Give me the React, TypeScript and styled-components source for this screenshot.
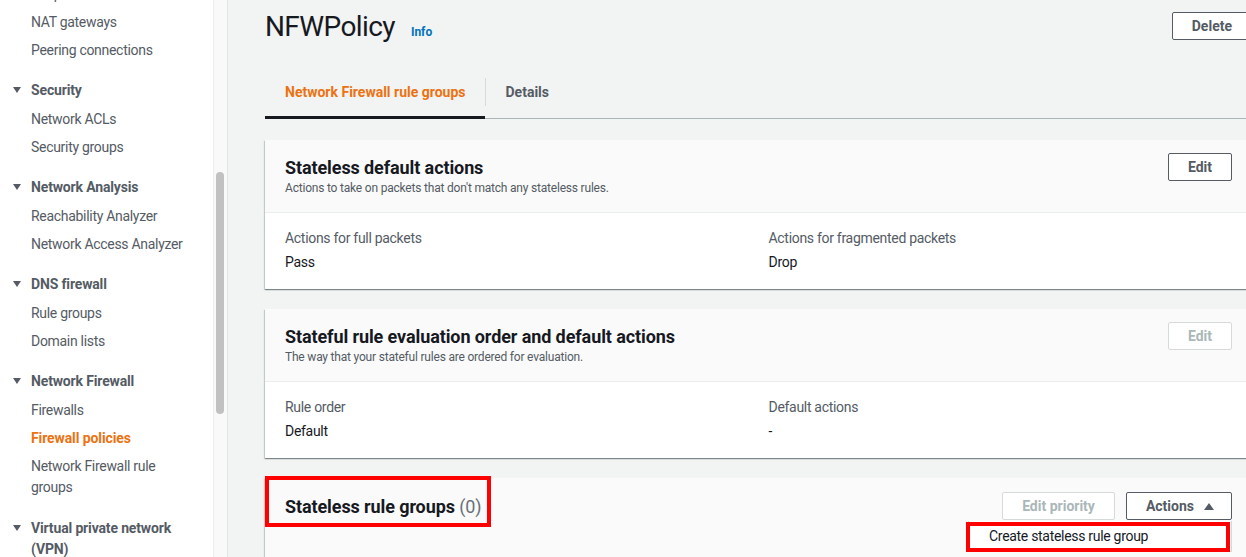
import React from "react";
import styled, { createGlobalStyle } from "styled-components";

const Global = createGlobalStyle`
  html, body { margin: 0; padding: 0; }
  body {
    font-family: Roboto, "Liberation Sans", Arial, sans-serif;
    font-size: 14px;
    color: #16191f;
    background: #f2f3f3;
  }
  * { box-sizing: border-box; }
`;

const Page = styled.div`
  display: flex;
  width: 1246px;
  height: 557px;
  overflow: hidden;
`;

/* ---------- Sidebar ---------- */
const Sidebar = styled.nav`
  width: 213px;
  flex-shrink: 0;
  background: #ffffff;
  overflow: hidden;
`;

const NavList = styled.div`
  margin-top: -20px;
  display: flex;
  flex-direction: column;
`;

const NavItem = styled.div<{ $active?: boolean }>`
  padding: 4px 22px 4px 31px;
  line-height: 20px;
  font-size: 14px;
  letter-spacing: ${(p) => (p.$active ? "-0.1px" : "-0.3px")};
  color: ${(p) => (p.$active ? "#ec7211" : "#545b64")};
  font-weight: ${(p) => (p.$active ? 700 : 400)};
`;

const WrapItem = styled(NavItem)`
  line-height: 21px;
`;

const Section = styled.div`
  margin-top: 11px;
  display: flex;
  flex-direction: column;
`;

const SectionHeader = styled.div`
  display: flex;
  align-items: flex-start;
  gap: 10px;
  padding: 5px 28px 5px 13px;
  line-height: 20px;
  font-weight: 700;
  letter-spacing: -0.15px;
  color: #545b64;
`;

const Caret = styled.svg`
  width: 8px;
  height: 20px;
  flex-shrink: 0;
`;

const SectionLabel = styled.span<{ $wrap?: boolean }>`
  line-height: ${(p) => (p.$wrap ? 21 : 20)}px;
`;

const ScrollTrack = styled.div`
  width: 15px;
  flex-shrink: 0;
  background: #f9f9f9;
  border-left: 1px solid #ececec;
  border-right: 1px solid #e1e4e4;
  padding-left: 2px;
`;

const ScrollThumb = styled.div`
  width: 8px;
  height: 242px;
  margin-top: 172px;
  border-radius: 4px;
  background: #c1c1c1;
`;

/* ---------- Main ---------- */
const Main = styled.main`
  flex: 1;
  overflow: hidden;
  padding-left: 37px;
  background: #f2f3f3;
`;

const Content = styled.div`
  width: 987px;
  display: flex;
  flex-direction: column;
`;

const HeaderRow = styled.div`
  display: flex;
  align-items: flex-start;
  justify-content: space-between;
  padding-top: 12px;
`;

const TitleGroup = styled.div`
  display: flex;
  align-items: baseline;
  gap: 16px;
`;

const PageTitle = styled.h1`
  margin: 0;
  font-size: 28px;
  line-height: 30px;
  font-weight: 400;
  letter-spacing: -0.6px;
  color: #16191f;
`;

const InfoLink = styled.a`
  font-size: 12px;
  font-weight: 700;
  color: #0073bb;
  text-decoration: none;
`;

const Button = styled.button<{ $disabled?: boolean }>`
  display: inline-flex;
  align-items: center;
  gap: 10px;
  height: 28px;
  padding: 0 19px;
  background: #ffffff;
  border: 1px solid ${(p) => (p.$disabled ? "#d5dbdb" : "#545b64")};
  border-radius: 2px;
  font-family: inherit;
  font-size: 14px;
  font-weight: 700;
  line-height: 20px;
  color: ${(p) => (p.$disabled ? "#aab7b8" : "#545b64")};
  cursor: pointer;
  white-space: nowrap;
`;

const MenuButton = styled(Button)`
  padding-right: 17px;
`;

const Tabs = styled.div`
  display: flex;
  align-items: center;
  margin-top: 28px;
  border-bottom: 1px solid #aab7b8;
`;

const Tab = styled.div<{ $active?: boolean }>`
  position: relative;
  padding: 12px 19px 16px 20px;
  line-height: 20px;
  font-weight: 700;
  color: ${(p) => (p.$active ? "#ec7211" : "#545b64")};
  &::after {
    content: "";
    position: absolute;
    left: 0;
    right: 0;
    bottom: -1px;
    height: 3px;
    background: ${(p) => (p.$active ? "#16191f" : "transparent")};
  }
`;

const TabDivider = styled.span`
  width: 1px;
  height: 28px;
  background: #d5dbdb;
  margin-bottom: 4px;
`;

const Cards = styled.div`
  display: flex;
  flex-direction: column;
  gap: 20px;
  margin-top: 21px;
`;

const Card = styled.section`
  background: #ffffff;
  box-shadow: 0 1px 1px 0 rgba(0, 28, 36, 0.3),
    1px 1px 1px 0 rgba(0, 28, 36, 0.15), -1px 1px 1px 0 rgba(0, 28, 36, 0.15);
`;

const CardHeader = styled.div<{ $tall?: boolean }>`
  display: flex;
  align-items: flex-start;
  justify-content: space-between;
  padding: ${(p) => (p.$tall ? "14px 20px 60px" : "13px 20px 16px")};
  background: #fafafa;
  border-bottom: 1px solid #eaeded;
`;

const HeadingBlock = styled.div<{ $pad?: number }>`
  position: relative;
  padding-top: ${(p) => p.$pad ?? 3}px;
`;

const CardTitle = styled.h2<{ $lh?: number }>`
  margin: 0;
  font-size: 18px;
  line-height: ${(p) => p.$lh ?? 24}px;
  font-weight: 700;
  letter-spacing: -0.1px;
  color: #16191f;
`;

const Counter = styled.span`
  font-weight: 400;
  color: #687078;
`;

const CardDesc = styled.p`
  margin: 0;
  font-size: 12px;
  line-height: 16px;
  letter-spacing: -0.2px;
  color: #545b64;
`;

const CardBody = styled.div`
  display: grid;
  grid-template-columns: 1fr 1fr;
  column-gap: 20px;
  padding: 15px 20px 17px;
`;

const Field = styled.div`
  display: flex;
  flex-direction: column;
  gap: 4px;
  letter-spacing: -0.3px;
`;

const FieldLabel = styled.div`
  line-height: 20px;
  color: #545b64;
`;

const FieldValue = styled.div`
  line-height: 20px;
  color: #16191f;
`;

const ButtonRow = styled.div`
  display: flex;
  gap: 11px;
`;

const DropdownAnchor = styled.div`
  position: relative;
`;

const Menu = styled.ul`
  position: absolute;
  top: 100%;
  right: 0;
  width: 264px;
  margin: 1px 0 0;
  padding: 0;
  list-style: none;
  background: #ffffff;
  border: 1px solid #d5dbdb;
  border-top: none;
  z-index: 2;
`;

const MenuItem = styled.li`
  position: relative;
  padding: 5px 20px;
  line-height: 20px;
  font-size: 14px;
  letter-spacing: -0.3px;
  color: #16191f;
`;

const Annotation = styled.span<{ $t: number; $r: number; $b: number; $l: number }>`
  position: absolute;
  top: ${(p) => p.$t}px;
  right: ${(p) => p.$r}px;
  bottom: ${(p) => p.$b}px;
  left: ${(p) => p.$l}px;
  border: 4px solid #ff0000;
  pointer-events: none;
`;

const TriangleDown = () => (
  <Caret viewBox="0 0 8 20" aria-hidden>
    <path d="M0 7 L8 7 L4 13 Z" fill="#545b64" />
  </Caret>
);

const TriangleUp = styled.svg`
  width: 10px;
  height: 8px;
`;

const nav = [
  { title: "Security", items: ["Network ACLs", "Security groups"] },
  {
    title: "Network Analysis",
    items: ["Reachability Analyzer", "Network Access Analyzer"],
  },
  { title: "DNS firewall", items: ["Rule groups", "Domain lists"] },
];

export default function App() {
  return (
    <>
      <Global />
      <Page>
        <Sidebar>
          <NavList>
            <NavItem>Endpoint services</NavItem>
            <NavItem>NAT gateways</NavItem>
            <NavItem>Peering connections</NavItem>
            {nav.map((s) => (
              <Section key={s.title}>
                <SectionHeader>
                  <TriangleDown />
                  <SectionLabel>{s.title}</SectionLabel>
                </SectionHeader>
                {s.items.map((i) => (
                  <NavItem key={i}>{i}</NavItem>
                ))}
              </Section>
            ))}
            <Section>
              <SectionHeader>
                <TriangleDown />
                <SectionLabel>Network Firewall</SectionLabel>
              </SectionHeader>
              <NavItem>Firewalls</NavItem>
              <NavItem $active>Firewall policies</NavItem>
              <WrapItem>Network Firewall rule groups</WrapItem>
            </Section>
            <Section>
              <SectionHeader>
                <TriangleDown />
                <SectionLabel $wrap>Virtual private network (VPN)</SectionLabel>
              </SectionHeader>
              <NavItem>Customer gateways</NavItem>
            </Section>
          </NavList>
        </Sidebar>
        <ScrollTrack>
          <ScrollThumb />
        </ScrollTrack>
        <Main>
          <Content>
            <HeaderRow>
              <TitleGroup>
                <PageTitle>NFWPolicy</PageTitle>
                <InfoLink>Info</InfoLink>
              </TitleGroup>
              <Button>Delete</Button>
            </HeaderRow>

            <Tabs>
              <Tab $active>Network Firewall rule groups</Tab>
              <TabDivider />
              <Tab>Details</Tab>
            </Tabs>

            <Cards>
              <Card>
                <CardHeader>
                  <HeadingBlock>
                    <CardTitle>Stateless default actions</CardTitle>
                    <CardDesc>
                      Actions to take on packets that don't match any stateless rules.
                    </CardDesc>
                  </HeadingBlock>
                  <Button>Edit</Button>
                </CardHeader>
                <CardBody>
                  <Field>
                    <FieldLabel>Actions for full packets</FieldLabel>
                    <FieldValue>Pass</FieldValue>
                  </Field>
                  <Field>
                    <FieldLabel>Actions for fragmented packets</FieldLabel>
                    <FieldValue>Drop</FieldValue>
                  </Field>
                </CardBody>
              </Card>

              <Card>
                <CardHeader>
                  <HeadingBlock>
                    <CardTitle>Stateful rule evaluation order and default actions</CardTitle>
                    <CardDesc>The way that your stateful rules are ordered for evaluation.</CardDesc>
                  </HeadingBlock>
                  <Button $disabled>Edit</Button>
                </CardHeader>
                <CardBody>
                  <Field>
                    <FieldLabel>Rule order</FieldLabel>
                    <FieldValue>Default</FieldValue>
                  </Field>
                  <Field>
                    <FieldLabel>Default actions</FieldLabel>
                    <FieldValue>-</FieldValue>
                  </Field>
                </CardBody>
              </Card>

              <Card>
                <CardHeader $tall>
                  <HeadingBlock $pad={4}>
                    <CardTitle $lh={22}>
                      Stateless rule groups <Counter>(0)</Counter>
                    </CardTitle>
                    <Annotation $t={-16} $r={-10} $b={-9} $l={-20} />
                  </HeadingBlock>
                  <ButtonRow>
                    <Button $disabled>Edit priority</Button>
                    <DropdownAnchor>
                      <MenuButton>
                        Actions
                        <TriangleUp viewBox="0 0 10 8" aria-hidden>
                          <path d="M0 8 L10 8 L5 1 Z" fill="#545b64" />
                        </TriangleUp>
                      </MenuButton>
                      <Menu>
                        <MenuItem>
                          Create stateless rule group
                          <Annotation $t={1} $r={1} $b={-1} $l={-3} />
                        </MenuItem>
                      </Menu>
                    </DropdownAnchor>
                  </ButtonRow>
                </CardHeader>
              </Card>
            </Cards>
          </Content>
        </Main>
      </Page>
    </>
  );
}
